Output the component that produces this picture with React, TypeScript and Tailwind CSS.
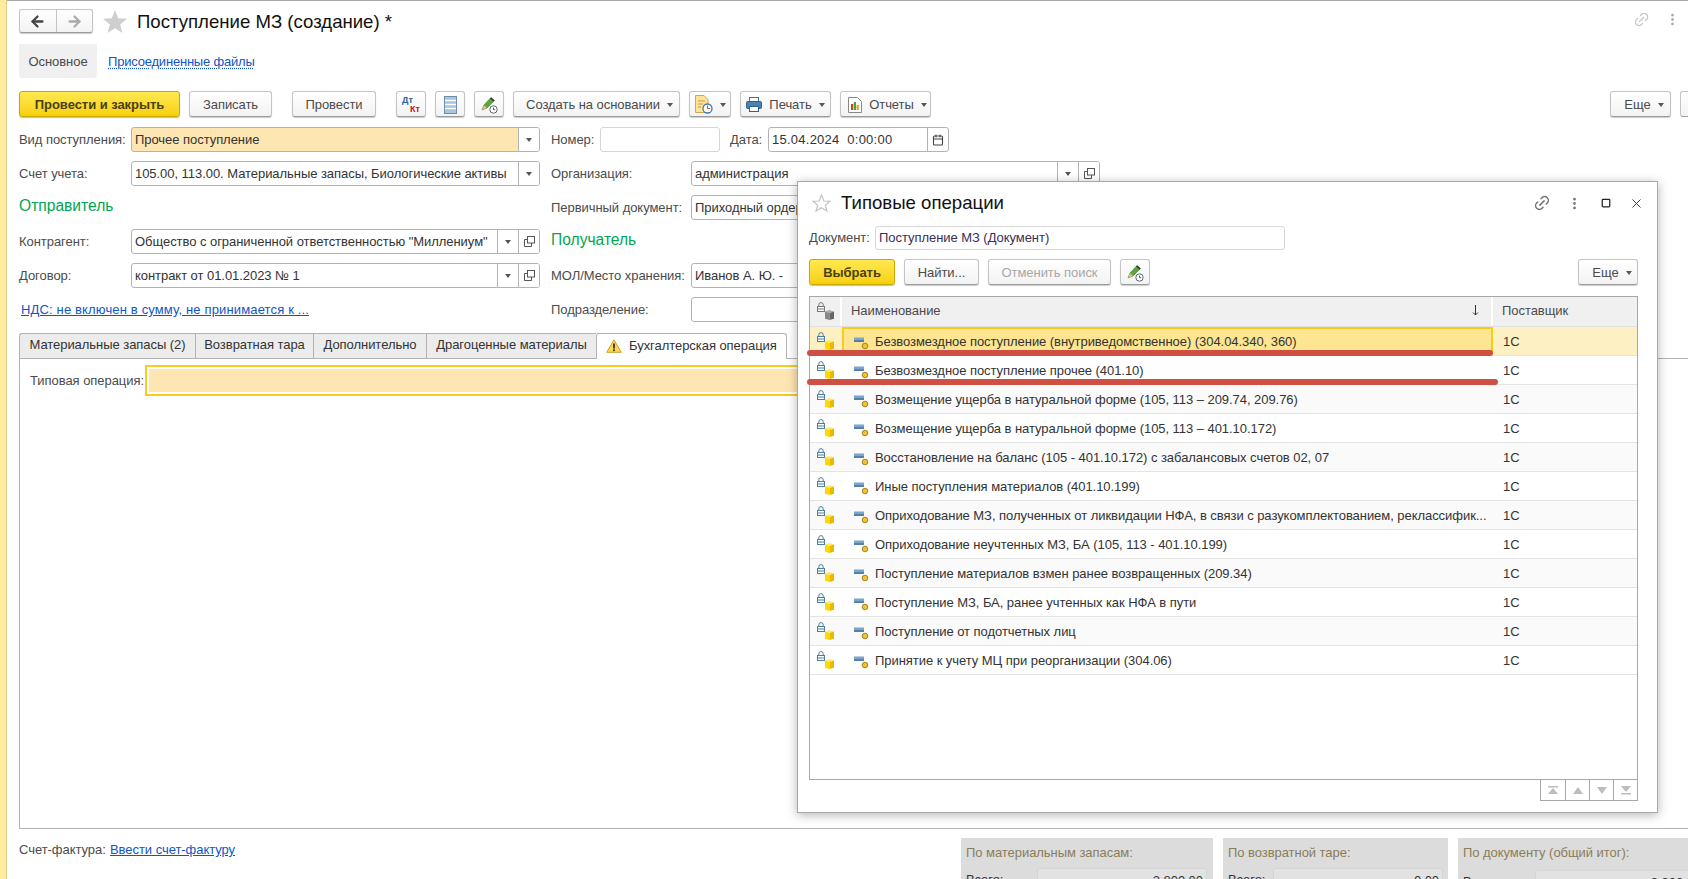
import type { ReactNode } from "react";
import { ArrowLeft, ArrowRight, Link2, MoreVertical, Square, X, Calendar } from "lucide-react";

const rows = [
  "Безвозмездное поступление (внутриведомственное) (304.04.340, 360)",
  "Безвозмездное поступление прочее (401.10)",
  "Возмещение ущерба в натуральной форме (105, 113 – 209.74, 209.76)",
  "Возмещение ущерба в натуральной форме (105, 113 – 401.10.172)",
  "Восстановление на баланс (105 - 401.10.172) с забалансовых счетов 02, 07",
  "Иные поступления материалов (401.10.199)",
  "Оприходование МЗ, полученных от ликвидации НФА, в связи с разукомплектованием, реклассифик...",
  "Оприходование неучтенных МЗ, БА (105, 113 - 401.10.199)",
  "Поступление материалов взмен ранее возвращенных (209.34)",
  "Поступление МЗ, БА, ранее учтенных как НФА в пути",
  "Поступление от подотчетных лиц",
  "Принятие к учету МЦ при реорганизации (304.06)",
];

const tabs = [
  { label: "Материальные запасы (2)", w: "w-[176px]" },
  { label: "Возвратная тара", w: "w-[118px]" },
  { label: "Дополнительно", w: "w-[113px]" },
  { label: "Драгоценные материалы", w: "w-[170px]" },
];

function Caret() {
  return <span className="inline-block w-0 h-0 border-x-[3.5px] border-x-transparent border-t-[4px] border-t-[#555]" />;
}

function Btn({ className = "", children }: { className?: string; children: ReactNode }) {
  return (
    <div
      className={`h-[26px] shrink-0 flex items-center justify-center gap-[7px] pt-[1px] rounded-[3px] border border-[#c4c4c4] border-b-[#9a9a9a] bg-gradient-to-b from-white to-[#f3f3f3] shadow-[0_1px_1px_rgba(0,0,0,0.2)] text-[#4b4b4b] ${className}`}
    >
      {children}
    </div>
  );
}

function YellowBtn({ className = "", children }: { className?: string; children: ReactNode }) {
  return (
    <div
      className={`h-[26px] shrink-0 flex items-center justify-center pt-[1px] rounded-[3px] border border-[#c9a800] bg-gradient-to-b from-[#ffe94d] to-[#f7d000] shadow-[0_1px_1px_rgba(0,0,0,0.25)] font-bold text-[#4a3f10] ${className}`}
    >
      {children}
    </div>
  );
}

function PenIcon() {
  return (
    <svg width="20" height="20" viewBox="0 0 20 20">
      <path d="M3 15 L5 10 L12 2.5 L15.5 5.5 L8 13 Z" fill="#5aa83c" stroke="#3c7a28" strokeWidth="0.6" />
      <path d="M3 15 L5 10 L8 13 Z" fill="#e0b98a" />
      <path d="M11 3.5 L12 2.5 L15.5 5.5 L14.5 6.5 Z" fill="#333" />
      <circle cx="14.5" cy="14.5" r="3.7" fill="#fff" stroke="#5b6b7a" strokeWidth="1" />
      <path d="M14.5 12.6 V14.7 H16.2" fill="none" stroke="#3a4a5a" strokeWidth="0.9" />
    </svg>
  );
}

function CopyIcon() {
  return (
    <svg width="11" height="11" viewBox="0 0 11 11" fill="none" stroke="#555" strokeWidth="1">
      <rect x="3.5" y="0.5" width="7" height="6.5" fill="#fff" />
      <path d="M3.5 3.5 H0.5 V10.5 H7.5 V7" />
    </svg>
  );
}

function LockIcon({ color = "#4d7f9e" }: { color?: string }) {
  return (
    <svg width="8" height="10" viewBox="0 0 8 10" fill="none">
      <path d="M1.8 4.5 V2.8 A2.2 2.2 0 0 1 6.2 2.8 V4.5" stroke={color} strokeWidth="1" />
      <rect x="0.5" y="4.5" width="7" height="5" fill="#fff" stroke={color} />
      <path d="M1 7 H7" stroke={color} />
    </svg>
  );
}

function Cube({ top = "#ffe966", left = "#ffd800", right = "#e8b900" }: { top?: string; left?: string; right?: string }) {
  return (
    <svg width="9" height="10" viewBox="0 0 9 10">
      <path d="M0 1.5 L4.5 0 L9 1.5 L4.5 3 Z" fill={top} />
      <path d="M0 1.5 L4.5 3 V10 L0 8.8 Z" fill={left} />
      <path d="M9 1.5 L4.5 3 V10 L9 8.8 Z" fill={right} />
    </svg>
  );
}

function ItemIcon() {
  return (
    <svg width="15" height="13" viewBox="0 0 15 13" className="shrink-0 mt-[4px]">
      <rect x="0" y="0.5" width="10" height="4" fill="#7ba6c9" />
      <rect x="0" y="3.5" width="10" height="1.2" fill="#2e5f8a" />
      <circle cx="11" cy="9" r="2.8" fill="#f2c230" stroke="#9a7a1a" strokeWidth="0.9" />
    </svg>
  );
}

function Field({
  label,
  labelW,
  w,
  value,
  fill,
  buttons = [],
}: {
  label: string;
  labelW: string;
  w: string;
  value: string;
  fill?: boolean;
  buttons?: ReactNode[];
}) {
  return (
    <div className="flex items-center h-[25px]">
      <div className={`${labelW} shrink-0 text-[#4b4b4b] whitespace-nowrap`}>{label}</div>
      <div className={`${w} h-full flex rounded-[3px] border border-[#b3b3b3] overflow-hidden ${fill ? "bg-[#fee6b3]" : "bg-white"}`}>
        <div className="flex-1 px-[3px] leading-[23px] text-[#333] whitespace-nowrap overflow-hidden">{value}</div>
        {buttons.map((b, i) => (
          <div key={i} className="w-[21px] shrink-0 flex items-center justify-center border-l border-[#b3b3b3] bg-white">
            {b}
          </div>
        ))}
      </div>
    </div>
  );
}

function SumPanel({
  title,
  labelW,
  value,
  w,
  bold,
  headH = "h-[30px]",
}: {
  title: string;
  labelW: string;
  value: string;
  w: string;
  bold?: boolean;
  headH?: string;
}) {
  return (
    <div className={`${w} h-[41px] shrink-0 overflow-hidden bg-[#dcdcdc] pl-[5px]`}>
      <div className={`${headH} leading-[29px] text-[#8a7d5a] whitespace-nowrap`}>{title}</div>
      <div className="flex text-[#333]">
        <span className={`${labelW} shrink-0 leading-[24px]`}>Всего:</span>
        <div className={`w-[170px] shrink-0 h-[25px] rounded-[3px] border border-[#d6d6d6] bg-[#e2e2e2] text-right pr-[3px] leading-[24px] ${bold ? "font-bold" : ""}`}>
          {value}
        </div>
      </div>
    </div>
  );
}

export default function App() {
  return (
    <div className="relative w-[1688px] h-[879px] overflow-hidden flex bg-white font-['Liberation_Sans',Arial,sans-serif] text-[13px] tracking-[-0.05px]">
      <div className="w-[7px] shrink-0 bg-[#fdeca0] border-r border-[#dccd8c]" />

      <div className="flex-1 min-w-0 flex flex-col pl-[12px] border-t border-[#a8a8a8]">
        {/* header */}
        <div className="flex items-center mt-[8px] h-[24px] relative">
          <div className="flex w-[74px] h-[24px] rounded-[3px] border border-[#c4c4c4] border-b-[#9a9a9a] bg-gradient-to-b from-white to-[#f3f3f3] shadow-[0_1px_1px_rgba(0,0,0,0.2)]">
            <div className="flex-1 flex items-center justify-center border-r border-[#c4c4c4]">
              <ArrowLeft size={17} strokeWidth={3.2} color="#444" />
            </div>
            <div className="flex-1 flex items-center justify-center">
              <ArrowRight size={17} strokeWidth={3.2} color="#aaa" />
            </div>
          </div>
          <svg width="24" height="23" viewBox="0 0 24 23" className="ml-[10px]">
            <path d="M12 0 L15.2 8.2 L24 8.8 L17.2 14.4 L19.4 23 L12 18.2 L4.6 23 L6.8 14.4 L0 8.8 L8.8 8.2 Z" fill="#cfcfcf" />
          </svg>
          <div className="ml-[10px] pt-[1px] text-[18.6px] text-[#111] tracking-normal whitespace-nowrap">Поступление МЗ (создание) *</div>
          <div className="ml-auto flex items-center gap-[15px] pr-[8px] pb-[3px]">
            <Link2 size={17} color="#c9c9c9" className="-rotate-45" />
            <MoreVertical size={15} color="#aaa" strokeWidth={2.5} />
          </div>
        </div>

        {/* form tabs */}
        <div className="flex items-center mt-[11px] h-[34px] pt-[1px]">
          <div className="w-[78px] -mt-[1px] h-[34px] flex items-center justify-center pt-[1px] rounded-[2px] bg-[#f0f0f0] text-[#4b4b4b]">Основное</div>
          <div className="ml-[11px] tracking-[-0.2px] text-[#0f55c8] underline decoration-dotted underline-offset-2">Присоединенные файлы</div>
        </div>

        {/* toolbar */}
        <div className="flex mt-[13px] h-[26px] items-center">
          <YellowBtn className="w-[161px] mr-[9px]">Провести и закрыть</YellowBtn>
          <Btn className="w-[83px] mr-[20px]">Записать</Btn>
          <Btn className="w-[84px] mr-[20px]">Провести</Btn>
          <Btn className="w-[30px] mr-[9px]">
            <div className="relative w-[18px] h-[18px] font-bold text-[9px] tracking-normal leading-none">
              <span className="absolute left-0 top-0 text-[#2a5f9e]">Дт</span>
              <span className="absolute right-0 bottom-0 text-[#d01010]">Кт</span>
            </div>
          </Btn>
          <Btn className="w-[30px] mr-[9px]">
            <svg width="13" height="18" viewBox="0 0 13 18">
              <rect x="0.5" y="0.5" width="12" height="17" fill="#a9c4dc" stroke="#6c8eac" />
              <path d="M1 4.5 H12 M1 8.5 H12 M1 12.5 H12" stroke="#fff" strokeWidth="1.4" />
            </svg>
          </Btn>
          <Btn className="w-[30px] mr-[9px]">
            <PenIcon />
          </Btn>
          <Btn className="w-[167px] mr-[9px] pl-[6px]">
            Создать на основании <Caret />
          </Btn>
          <Btn className="w-[42px] mr-[9px]">
            <svg width="18" height="19" viewBox="0 0 18 19">
              <path d="M0.5 0.5 H9 L13 4.5 V17.5 H0.5 Z" fill="#fbe39a" stroke="#d2a94a" />
              <path d="M3 6 H10 M3 9 H8 M3 12 H6" stroke="#c99b3a" />
              <circle cx="12.5" cy="13.5" r="4.5" fill="#fff" stroke="#3f78b5" strokeWidth="1.3" />
              <path d="M12.5 10.5 V13.5 H15" fill="none" stroke="#d0452c" />
            </svg>
            <Caret />
          </Btn>
          <Btn className="w-[91px] mr-[9px]">
            <svg width="16" height="15" viewBox="0 0 16 15">
              <rect x="3.5" y="0.5" width="9" height="5" fill="#fff" stroke="#3f6f9a" />
              <rect x="0.5" y="4.5" width="15" height="7" rx="1" fill="#4d82b0" stroke="#2f5f8a" />
              <rect x="3.5" y="9.5" width="9" height="5" fill="#fff" stroke="#2f5f8a" />
            </svg>
            Печать <Caret />
          </Btn>
          <Btn className="w-[91px] pl-[4px]">
            <svg width="14" height="16" viewBox="0 0 14 16">
              <path d="M0.5 0.5 H9.5 L13.5 4.5 V15.5 H0.5 Z" fill="#fff" stroke="#888" />
              <rect x="3" y="7" width="2.2" height="6" fill="#d83a2a" />
              <rect x="5.8" y="5" width="2.2" height="8" fill="#3fa83f" />
              <rect x="8.6" y="8" width="2.2" height="5" fill="#e0a020" />
            </svg>
            Отчеты <Caret />
          </Btn>
          <Btn className="w-[61px] ml-auto mr-[9px] pl-[7px]">
            Еще <Caret />
          </Btn>
          <div className="w-[8px] h-[26px] rounded-l-[3px] border border-r-0 border-[#c4c4c4] border-b-[#9a9a9a] bg-gradient-to-b from-white to-[#f3f3f3]" />
        </div>

        {/* form */}
        <div className="flex mt-[10px]">
          <div className="flex flex-col w-[532px] shrink-0 gap-[9px]">
            <Field label="Вид поступления:" labelW="w-[112px]" w="w-[409px]" value="Прочее поступление" fill buttons={[<Caret key="c" />]} />
            <Field label="Счет учета:" labelW="w-[112px]" w="w-[409px]" value="105.00, 113.00. Материальные запасы, Биологические активы" buttons={[<Caret key="c" />]} />
            <div className="h-[25px] leading-[21px] text-[15.6px] tracking-normal text-[#00a651]">Отправитель</div>
            <Field
              label="Контрагент:"
              labelW="w-[112px]"
              w="w-[409px]"
              value={'Общество с ограниченной ответственностью "Миллениум"'}
              buttons={[<Caret key="c" />, <CopyIcon key="o" />]}
            />
            <Field label="Договор:" labelW="w-[112px]" w="w-[409px]" value="контракт от 01.01.2023 № 1" buttons={[<Caret key="c" />, <CopyIcon key="o" />]} />
            <div className="h-[25px] leading-[25px] pl-[2px] tracking-[0.15px] text-[#0f55c8] underline whitespace-nowrap">НДС: не включен в сумму, не принимается к ...</div>
          </div>
          <div className="flex flex-col gap-[9px]">
            <div className="flex items-center h-[25px]">
              <div className="w-[49px] text-[#4b4b4b]">Номер:</div>
              <div className="w-[120px] h-full rounded-[3px] border border-[#d6d6d6]" />
              <div className="w-[48px] pl-[10px] text-[#4b4b4b]">Дата:</div>
              <div className="w-[181px] h-full flex rounded-[3px] border border-[#b3b3b3]">
                <div className="flex-1 px-[3px] leading-[23px] text-[#333] whitespace-pre tracking-[0.25px]">15.04.2024  0:00:00</div>
                <div className="w-[21px] flex items-center justify-center border-l border-[#b3b3b3]">
                  <Calendar size={12} color="#444" strokeWidth={2.2} />
                </div>
              </div>
            </div>
            <Field label="Организация:" labelW="w-[140px]" w="w-[409px]" value="администрация" buttons={[<Caret key="c" />, <CopyIcon key="o" />]} />
            <Field label="Первичный документ:" labelW="w-[140px]" w="w-[300px]" value="Приходный ордер" />
            <div className="h-[25px] leading-[21px] text-[15.6px] tracking-normal text-[#00a651]">Получатель</div>
            <Field label="МОЛ/Место хранения:" labelW="w-[140px]" w="w-[300px]" value="Иванов А. Ю. -" />
            <Field label="Подразделение:" labelW="w-[140px]" w="w-[300px]" value="" />
          </div>
        </div>

        {/* page tabs */}
        <div className="flex mt-[11px] h-[26px] relative z-10">
          {tabs.map((t) => (
            <div
              key={t.label}
              className={`${t.w} shrink-0 flex items-center justify-center pb-[2px] bg-[#ececec] border border-r-0 border-b-[#b3b3b3] border-[#b3b3b3] first:rounded-tl-[3px] text-[#333] whitespace-nowrap`}
            >
              {t.label}
            </div>
          ))}
          <div className="w-[191px] shrink-0 flex items-center gap-[7px] pl-[9px] pb-[2px] bg-white border border-b-0 border-[#b3b3b3] rounded-t-[3px] text-[#333] whitespace-nowrap">
            <svg width="16" height="14" viewBox="0 0 16 14">
              <path d="M8 0.8 L15.3 13.3 H0.7 Z" fill="#ffd84a" stroke="#c9a227" strokeLinejoin="round" />
              <rect x="7.1" y="4.5" width="1.8" height="5" fill="#333" />
              <rect x="7.1" y="10.3" width="1.8" height="1.8" fill="#333" />
            </svg>
            Бухгалтерская операция
          </div>
        </div>
        <div className="h-[471px] -mt-[1px] shrink-0 border border-r-0 border-[#b3b3b3] pt-[6px] pl-[10px]">
          <div className="flex items-center h-[31px]">
            <div className="w-[115px] shrink-0 text-[#4b4b4b] whitespace-nowrap">Типовая операция:</div>
            <div className="w-[700px] h-full border-2 border-[#f9cb1d] p-[2px]">
              <div className="w-full h-full bg-[#fee6b3]" />
            </div>
          </div>
        </div>

        {/* bottom */}
        <div className="flex mt-[9px] h-[41px]">
          <div className="flex pt-[3px] leading-[18px]">
            <span className="text-[#4b4b4b] w-[91px]">Счет-фактура:</span>
            <span className="text-[#0f55c8] underline">Ввести счет-фактуру</span>
          </div>
          <div className="ml-auto flex gap-[10px]">
            <SumPanel title="По материальным запасам:" w="w-[252px]" labelW="w-[71px]" value="2 800,00" />
            <SumPanel title="По возвратной таре:" w="w-[225px]" labelW="w-[45px]" value="0,00" />
            <SumPanel title="По документу (общий итог):" w="w-[230px]" labelW="w-[72px]" value="2 800,00" headH="h-[32px]" bold />
          </div>
        </div>
      </div>

      {/* dialog */}
      <div className="absolute left-[797px] top-[181px] w-[861px] h-[632px] flex flex-col bg-white border border-[#a8a8a8] shadow-[0_2px_10px_rgba(0,0,0,0.3)] px-[11px]">
        <div className="flex items-center h-[42px] shrink-0">
          <svg width="19" height="18" viewBox="0 0 19 18" className="ml-[3px]">
            <path d="M9.5 1 L11.9 7 L18 7.3 L13.3 11.2 L15 17 L9.5 13.7 L4 17 L5.7 11.2 L1 7.3 L7.1 7 Z" fill="#fff" stroke="#c4c4c4" strokeWidth="1.2" />
          </svg>
          <div className="ml-[10px] text-[18.6px] tracking-normal text-[#111] whitespace-nowrap">Типовые операции</div>
          <div className="ml-auto flex items-center">
            <Link2 size={18} color="#777" className="-rotate-45" />
            <MoreVertical size={15} color="#777" strokeWidth={2.5} className="ml-[16px]" />
            <Square size={10} color="#222" strokeWidth={3} className="ml-[19px]" />
            <X size={15} color="#333" strokeWidth={1.5} className="ml-[18px] mr-[2px]" />
          </div>
        </div>
        <div className="flex items-center h-[24px] mt-[2px] shrink-0">
          <div className="w-[66px] text-[#4b4b4b]">Документ:</div>
          <div className="w-[410px] h-full rounded-[3px] border border-[#d6d6d6] px-[3px] leading-[22px] text-[#3b2f55]">Поступление МЗ (Документ)</div>
        </div>
        <div className="flex items-center h-[26px] mt-[9px] mr-[8px] shrink-0">
          <YellowBtn className="w-[86px] mr-[9px]">Выбрать</YellowBtn>
          <Btn className="w-[75px] mr-[9px]">Найти...</Btn>
          <Btn className="w-[123px] mr-[9px] text-[#a8a8a8]">Отменить поиск</Btn>
          <Btn className="w-[30px]">
            <PenIcon />
          </Btn>
          <Btn className="w-[60px] ml-auto pl-[8px]">
            Еще <Caret />
          </Btn>
        </div>

        {/* table */}
        <div className="flex flex-col mt-[11px] mr-[8px] h-[484px] shrink-0 border border-[#a8a8a8]">
          <div className="flex h-[30px] shrink-0 bg-[#f0f0f0] border-b border-[#e0e0e0] text-[#4b4b4b]">
            <div className="w-[32px] shrink-0 border-r-2 border-white relative">
              <div className="absolute left-[7px] top-[5px]">
                <LockIcon color="#777" />
              </div>
              <div className="absolute left-[15px] top-[13px]">
                <Cube top="#aaa" left="#888" right="#666" />
              </div>
            </div>
            <div className="w-[651px] shrink-0 flex items-center justify-between pb-[2px] pl-[9px] pr-[12px] border-r-2 border-white">
              <span>Наименование</span>
              <svg width="7" height="11" viewBox="0 0 7 11" fill="none" stroke="#333">
                <path d="M3.5 0 V10 M1 7.5 L3.5 10 L6 7.5" />
              </svg>
            </div>
            <div className="flex-1 flex items-center pb-[2px] pl-[9px]">Поставщик</div>
          </div>
          {rows.map((name, i) => (
            <div
              key={name}
              className={`flex h-[29px] shrink-0 border-b border-[#e4e4e4] text-[#333] ${i === 0 ? "bg-[#fdf1c3]" : i % 2 === 0 ? "bg-[#fafafa]" : "bg-white"}`}
            >
              <div className="w-[32px] shrink-0 relative">
                <div className="absolute left-[7px] top-[5px]">
                  <LockIcon />
                </div>
                <div className="absolute left-[15px] top-[13px]">
                  <Cube />
                </div>
              </div>
              <div
                className={`w-[651px] shrink-0 flex items-center gap-[6px] pt-[1px] whitespace-nowrap overflow-hidden ${
                  i === 0 ? "bg-[#fde591] border-2 border-[#f9cb1d] pl-[10px]" : "pl-[12px]"
                }`}
              >
                <ItemIcon />
                {name}
              </div>
              <div className="flex-1 flex items-center pt-[1px] pl-[10px]">1С</div>
            </div>
          ))}
        </div>

        {/* pager */}
        <div className="flex justify-end mr-[8px] shrink-0">
          <div className="flex h-[21px] border border-t-0 border-[#a8a8a8]">
            {[0, 1, 2, 3].map((n) => (
              <div key={n} className="w-[24px] flex items-center justify-center border-l first:border-l-0 border-[#a8a8a8]">
                <svg width="10" height="9" viewBox="0 0 10 9" fill="#bdbdbd">
                  {n === 0 && <path d="M0 0 H10 V1.5 H0 Z M5 2 L10 8 H0 Z" />}
                  {n === 1 && <path d="M5 1 L10 8 H0 Z" />}
                  {n === 2 && <path d="M0 1 H10 L5 8 Z" />}
                  {n === 3 && <path d="M0 0 H10 L5 6 Z M0 7 H10 V8.5 H0 Z" />}
                </svg>
              </div>
            ))}
          </div>
        </div>
      </div>

      {/* red marks drawn over the picture */}
      <div className="absolute left-[807px] top-[350px] w-[686px] h-[6px] rounded-full bg-[#cf4f42]" />
      <div className="absolute left-[807px] top-[379px] w-[691px] h-[6px] rounded-full bg-[#cf4f42]" />
    </div>
  );
}
